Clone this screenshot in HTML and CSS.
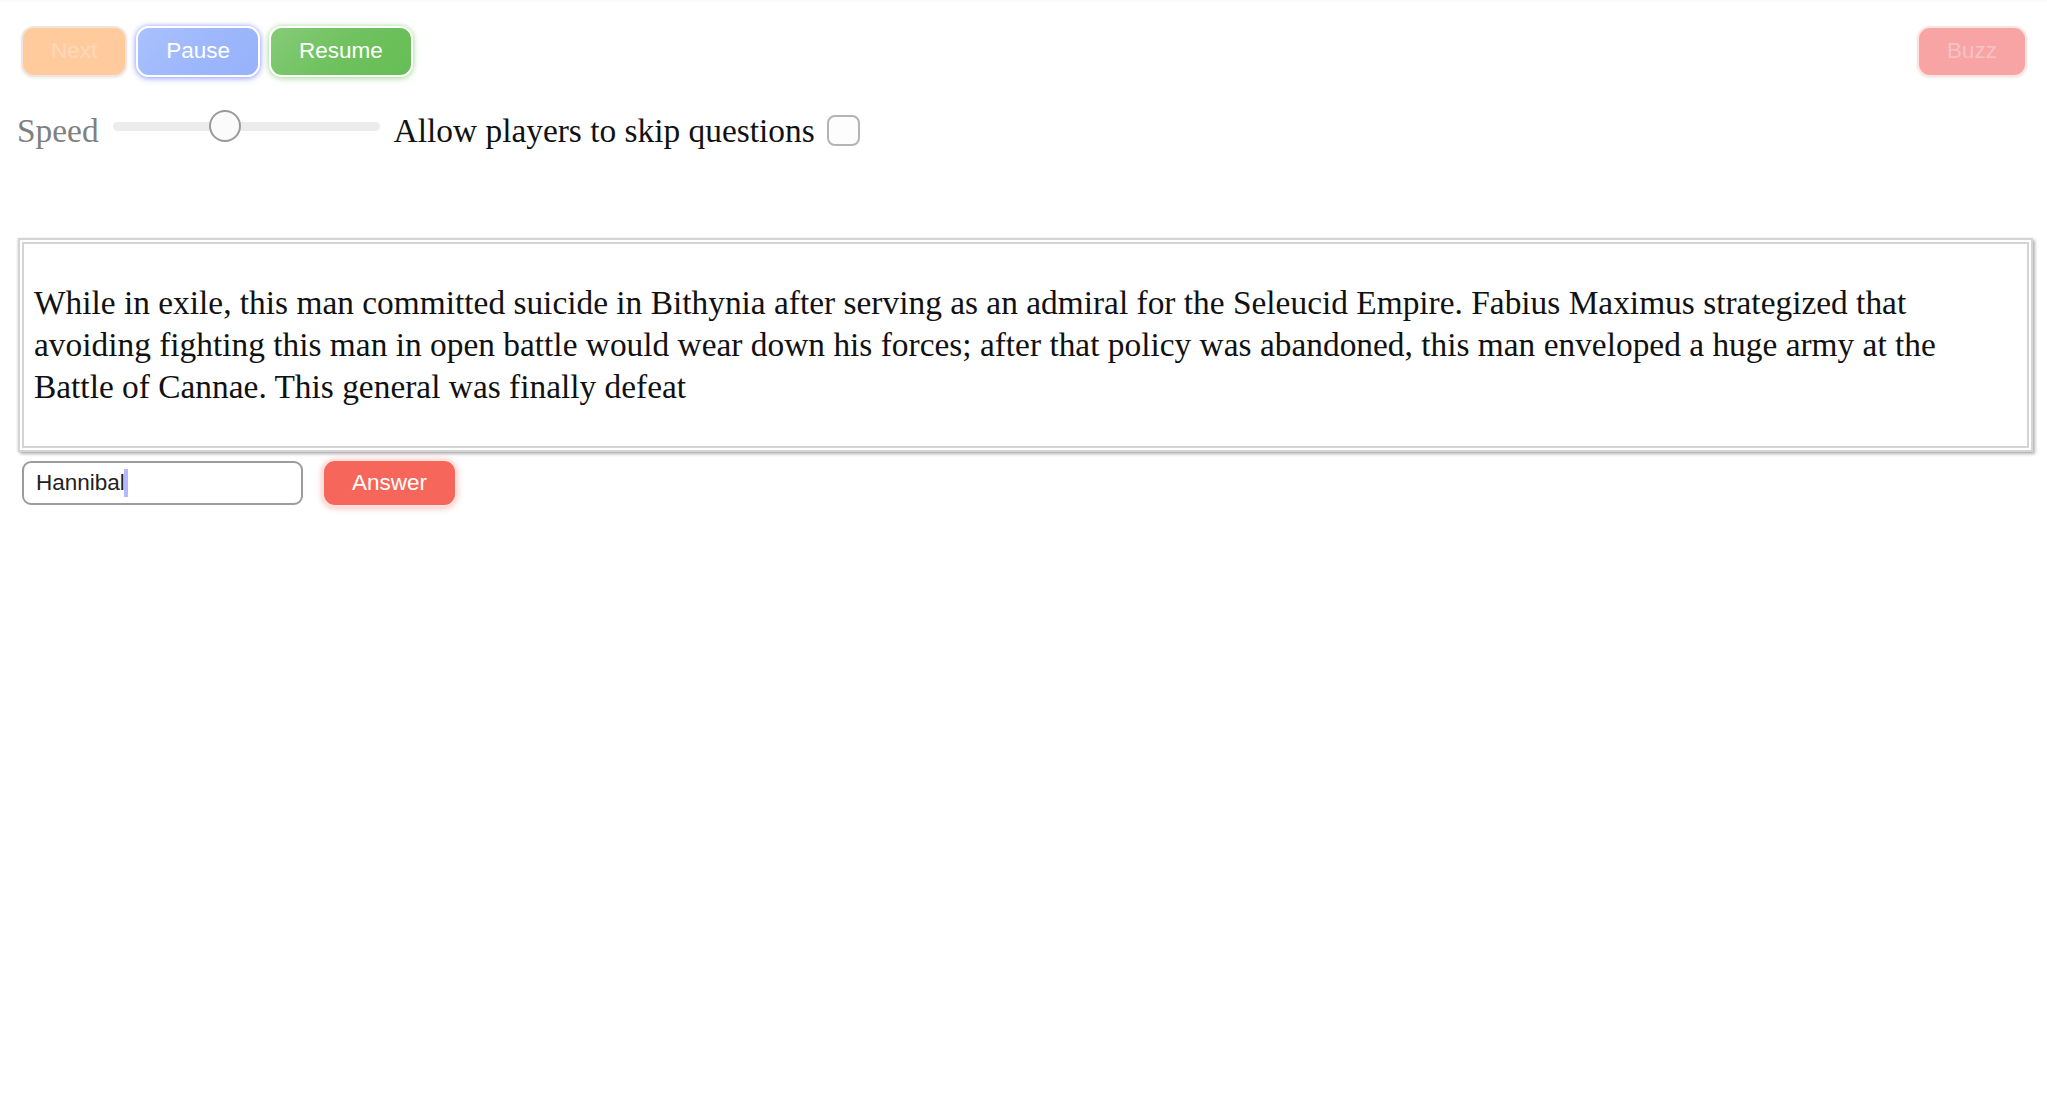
FILE: index.html
```html
<!DOCTYPE html>
<html lang="en">
<head>
<meta charset="utf-8">
<title>Quiz Bowl</title>
<link rel="stylesheet" href="styles.css">
</head>
<body>
<div class="page">
  <div class="topbar">
    <div class="controls">
      <button class="btn btn-next" disabled>Next</button>
      <button class="btn btn-pause">Pause</button>
      <button class="btn btn-resume">Resume</button>
    </div>
    <button class="btn btn-buzz" disabled>Buzz</button>
  </div>

  <div class="settings">
    <span class="speed-label">Speed</span>
    <input class="speed" type="range" min="0" max="100" value="41">
    <span class="skip-label">Allow players to skip questions</span>
    <input class="skip" type="checkbox">
  </div>

  <div class="question">
    <p>While in exile, this man committed suicide in Bithynia after serving as an admiral for the Seleucid Empire. Fabius Maximus strategized that avoiding fighting this man in open battle would wear down his forces; after that policy was abandoned, this man enveloped a huge army at the Battle of Cannae. This general was finally defeat</p>
  </div>

  <div class="answer-row">
    <div class="field">
      <input class="answer-input" type="text" value="Hannibal">
      <span class="caret"></span>
    </div>
    <button class="btn btn-answer">Answer</button>
  </div>
</div>
</body>
</html>
```

FILE: styles.css
```css
html, body {
  margin: 0;
  padding: 0;
  background: #ffffff;
}

body {
  font-family: "Liberation Serif", "Times New Roman", serif;
  color: #111;
}

.page {
  box-shadow: inset 0 3px 3px -2px rgba(0, 0, 0, 0.04);
  min-height: 1111px;
}

.topbar {
  display: flex;
  justify-content: space-between;
  align-items: flex-start;
  padding: 26px 20px 0 21px;
}

.controls {
  display: flex;
  gap: 9px;
}

.btn {
  font-family: "Liberation Sans", Arial, sans-serif;
  font-size: 22.5px;
  height: 51px;
  padding: 0 28px;
  border-radius: 13px;
  border: 2px solid #ffffff;
  color: #ffffff;
  cursor: pointer;
  line-height: 1;
}

.btn-next {
  background: #ffcb9d;
  border-color: #efe4de;
  color: #ffd8b9;
  box-shadow: 0 1px 3px rgba(0, 0, 0, 0.08);
}

.btn-pause {
  background: linear-gradient(135deg, #aac2fd 0%, #9bb6fb 60%, #97b2fa 100%);
  box-shadow: 0 0 5px rgba(110, 120, 255, 0.6), 0 2px 6px rgba(110, 120, 255, 0.4);
}

.btn-resume {
  background: linear-gradient(135deg, #86cb78 0%, #6fc25f 50%, #66bd55 100%);
  box-shadow: 0 0 5px rgba(120, 200, 100, 0.55), 0 2px 6px rgba(120, 200, 100, 0.35);
}

.btn-buzz {
  background: #f9a4a4;
  border-color: #fbe3df;
  color: #f3c3c3;
  box-shadow: 0 1px 3px rgba(0, 0, 0, 0.08);
}

.settings {
  display: flex;
  align-items: flex-start;
  padding: 33px 0 0 17px;
  height: 40px;
}

.speed-label {
  font-size: 33.4px;
  line-height: 38px;
  margin-top: 2px;
  color: #808080;
  margin-right: 14px;
}

.speed {
  -webkit-appearance: none;
  appearance: none;
  width: 267px;
  height: 32px;
  margin: 0 14px 0 0;
  padding: 0;
  background: transparent;
}

.speed::-webkit-slider-runnable-track {
  height: 9px;
  border-radius: 5px;
  background: #ececec;
}

.speed::-webkit-slider-thumb {
  -webkit-appearance: none;
  appearance: none;
  width: 32px;
  height: 32px;
  margin-top: -12px;
  border-radius: 50%;
  background: #fbfbfb;
  border: 2px solid #9a9a9a;
  box-sizing: border-box;
}

.skip-label {
  font-size: 33.4px;
  line-height: 38px;
  margin-top: 2px;
  color: #111;
  margin-right: 12px;
}

.skip {
  -webkit-appearance: none;
  appearance: none;
  width: 33px;
  height: 31px;
  margin: 5px 0 0 0;
  border: 2px solid #b4b4b4;
  border-radius: 8px;
  background: #fdfdfd;
  box-sizing: border-box;
}

.question {
  margin: 88px 14px 0 18px;
  border: 6px double #d4d4d4;
  padding: 6px 10px;
  background: #ffffff;
  box-shadow: 2px 2px 3px rgba(0, 0, 0, 0.3), -1px 0 2px rgba(0, 0, 0, 0.1);
}

.question p {
  margin: 32px 0;
  font-size: 33.4px;
  line-height: 42px;
  color: #111;
}

.answer-row {
  display: flex;
  align-items: center;
  gap: 19px;
  padding: 7px 0 0 22px;
}

.field {
  position: relative;
  display: flex;
}

.answer-input {
  width: 281px;
  height: 44px;
  box-sizing: border-box;
  border: 2px solid #9c9c9c;
  border-radius: 9px;
  padding: 0 12px;
  font-family: "Liberation Sans", Arial, sans-serif;
  font-size: 22.5px;
  color: #222;
  background: #fff;
  outline: none;
}

.caret {
  position: absolute;
  left: 102px;
  top: 8px;
  width: 4px;
  height: 28px;
  background: #b4b9ff;
}

.btn-answer {
  height: 48px;
  padding: 0 28px;
  background: #f7665a;
  border-color: #fde1dd;
  box-shadow: 0 1px 6px rgba(247, 102, 90, 0.45);
}
```
